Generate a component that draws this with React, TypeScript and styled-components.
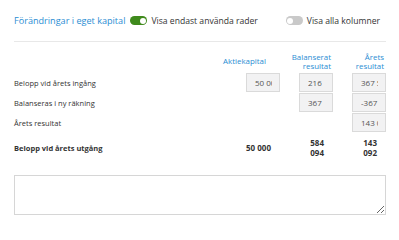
import styled, { createGlobalStyle } from 'styled-components';

const GlobalStyle = createGlobalStyle`
  body {
    margin: 0;
    background: #fff;
    font-family: "Open Sans", "Noto Sans", sans-serif;
    color: #333;
  }
`;

const Page = styled.div`
  width: 399px;
  padding: 0 13px 0 14px;
  box-sizing: border-box;
`;

const Toolbar = styled.div`
  display: flex;
  align-items: center;
  height: 41px;
  border-bottom: 1px solid #e8e8e8;
`;

const Title = styled.h2`
  margin: 0 5px 0 0;
  font-size: 9.1px;
  font-weight: 400;
  color: #2a8dd3;
`;

const Toggle = styled.span<{ $on?: boolean }>`
  position: relative;
  display: inline-block;
  width: 17px;
  height: 9px;
  border-radius: 5px;
  background: ${(p) => (p.$on ? '#3f8a1c' : '#c9c9c9')};
  margin-right: 4px;

  &::after {
    content: '';
    position: absolute;
    top: 1.5px;
    left: ${(p) => (p.$on ? '9.5px' : '1.5px')};
    width: 6px;
    height: 6px;
    border-radius: 50%;
    background: #fff;
  }
`;

const ToggleGroup = styled.label<{ $right?: boolean }>`
  display: flex;
  align-items: center;
  font-size: 8.6px;
  color: #333;
  margin-left: ${(p) => (p.$right ? 'auto' : '0')};
  margin-right: ${(p) => (p.$right ? '6px' : '0')};
`;

const Grid = styled.div`
  display: grid;
  grid-template-columns: 1fr 53px 53px 53px;
  margin-top: 10px;
`;

const HeadCell = styled.div<{ $pad?: number }>`
  display: flex;
  align-items: center;
  justify-content: flex-end;
  text-align: right;
  height: 20px;
  padding-right: ${(p) => p.$pad ?? 2}px;
  font-size: 7.9px;
  line-height: 9.5px;
  color: #2a8dd3;
  margin-bottom: 1px;
`;

const Label = styled.div<{ $bold?: boolean }>`
  display: flex;
  align-items: center;
  height: ${(p) => (p.$bold ? '24px' : '20px')};
  margin-top: ${(p) => (p.$bold ? '3px' : '0')};
  font-size: 7.5px;
  font-weight: ${(p) => (p.$bold ? 700 : 400)};
`;

const Cell = styled.div<{ $bold?: boolean }>`
  display: flex;
  align-items: center;
  justify-content: flex-end;
  height: ${(p) => (p.$bold ? '24px' : '20px')};
  margin-top: ${(p) => (p.$bold ? '3px' : '0')};
`;

const Input = styled.input`
  width: 34px;
  height: 19px;
  box-sizing: border-box;
  margin: 0 0 1px;
  padding: 0 7px 0 8px;
  border: 1px solid #dadada;
  background: #f2f2f3;
  font-family: "Open Sans", "Noto Sans", sans-serif;
  font-size: 8px;
  color: #555;
  outline: none;
`;

const Total = styled.div`
  width: 26px;
  margin-right: 9px;
  text-align: right;
  font-size: 8px;
  line-height: 10px;
  font-weight: 700;
`;

const Notes = styled.textarea`
  display: block;
  width: 100%;
  height: 40px;
  box-sizing: border-box;
  margin-top: 15px;
  border: 1px solid #d6d6d6;
  resize: vertical;
  font-family: "Open Sans", "Noto Sans", sans-serif;
`;

type Row = { label: string; values: (string | null)[] };

const rows: Row[] = [
  { label: 'Belopp vid årets ingång', values: ['50 000', '216', '367 543'] },
  { label: 'Balanseras i ny räkning', values: [null, '367', '-367'] },
  { label: 'Årets resultat', values: [null, null, '143 092'] },
];

const totals = ['50 000', '584 094', '143 092'];

export default function App() {
  return (
    <Page>
      <GlobalStyle />
      <Toolbar>
        <Title>Förändringar i eget kapital</Title>
        <ToggleGroup>
          <Toggle $on />
          Visa endast använda rader
        </ToggleGroup>
        <ToggleGroup $right>
          <Toggle />
          Visa alla kolumner
        </ToggleGroup>
      </Toolbar>
      <Grid>
        <div />
        <HeadCell $pad={14}>Aktiekapital</HeadCell>
        <HeadCell>Balanserat<br />resultat</HeadCell>
        <HeadCell>Årets<br />resultat</HeadCell>
        {rows.map((r) => (
          <>
            <Label key={r.label}>{r.label}</Label>
            {r.values.map((v, i) => (
              <Cell key={r.label + i}>{v !== null && <Input defaultValue={v} />}</Cell>
            ))}
          </>
        ))}
        <Label $bold>Belopp vid årets utgång</Label>
        {totals.map((t) => (
          <Cell $bold key={t}>
            <Total>{t}</Total>
          </Cell>
        ))}
      </Grid>
      <Notes />
    </Page>
  );
}
